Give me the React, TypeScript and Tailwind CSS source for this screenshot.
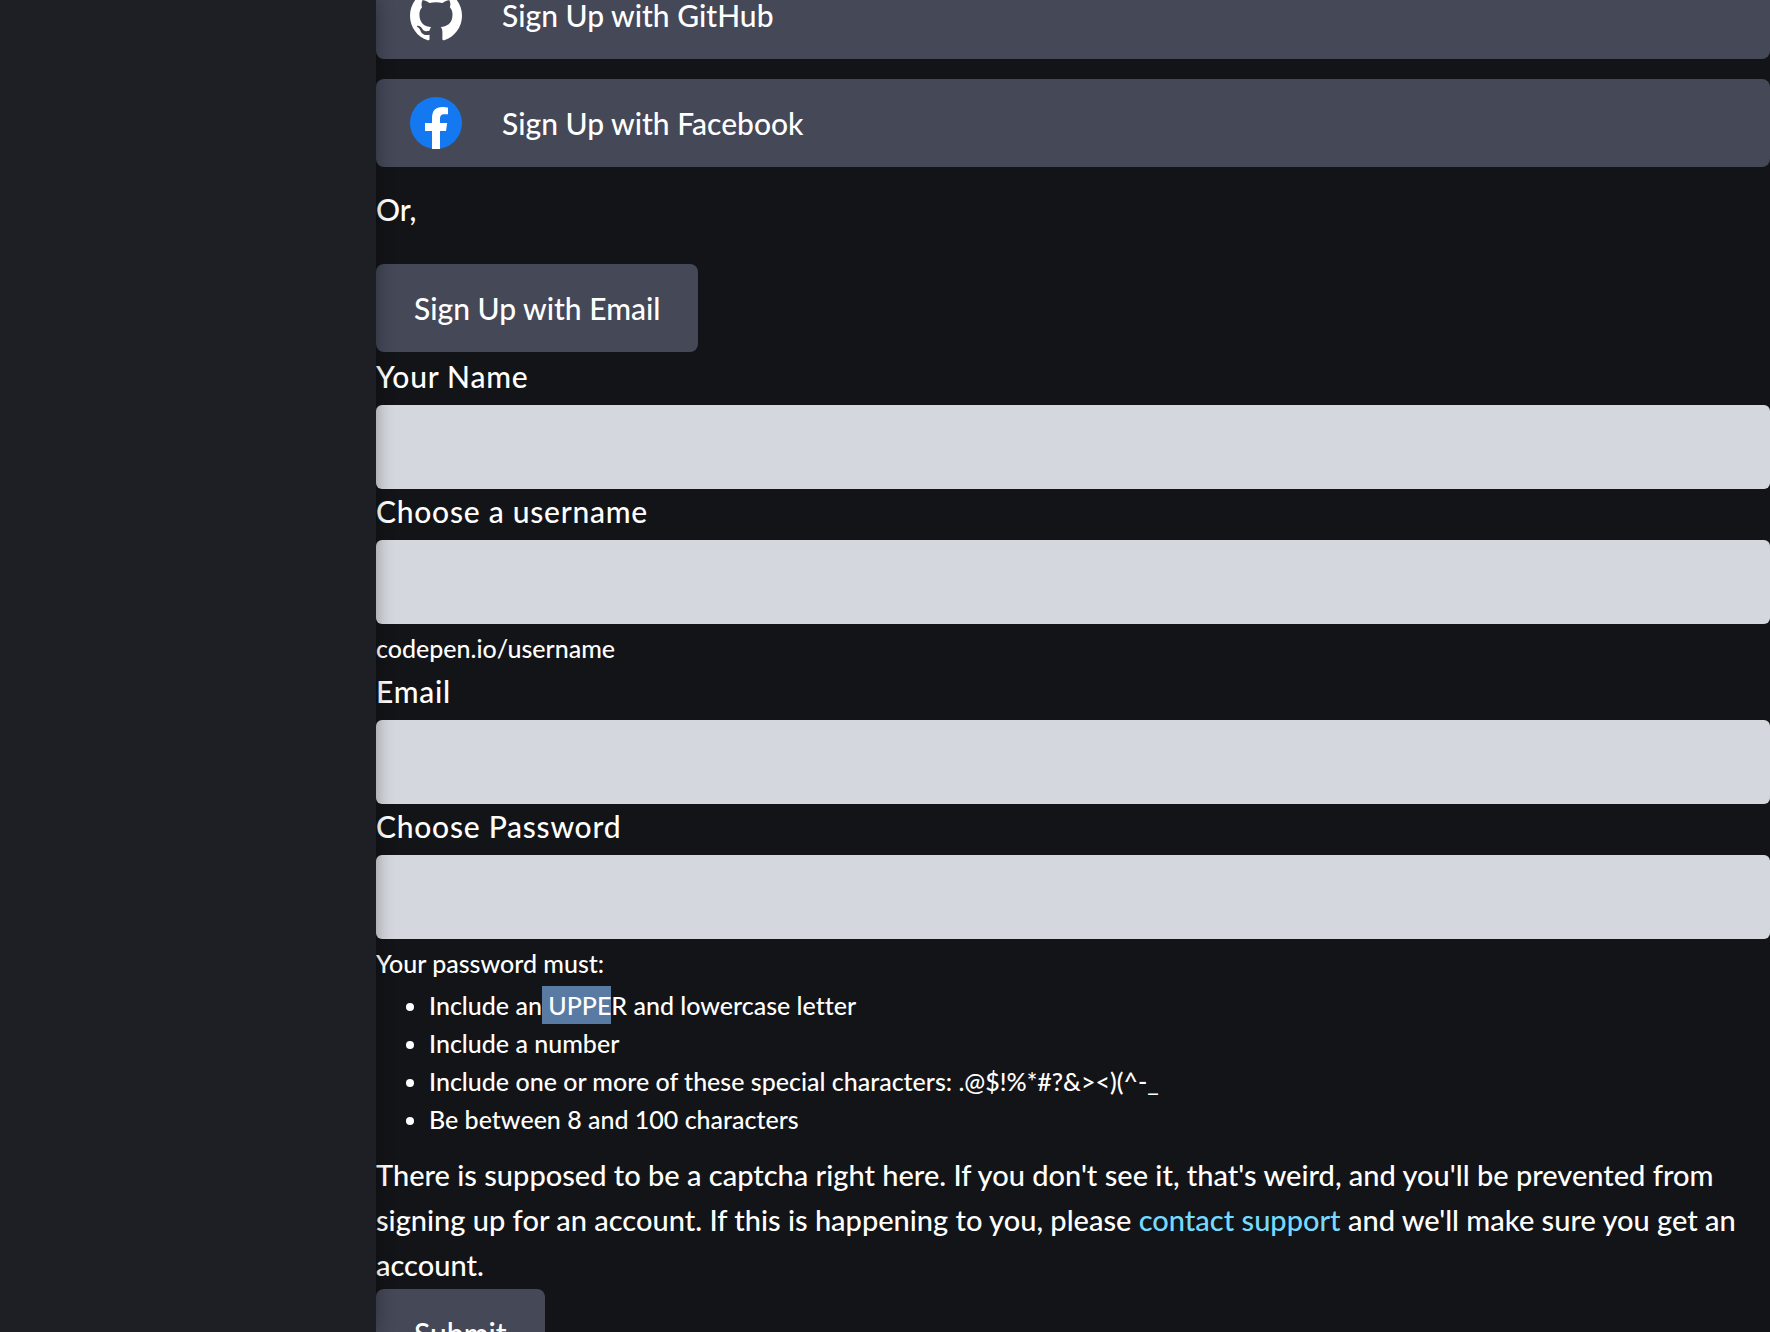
import { SiGithub } from "react-icons/si";
import type { ReactNode } from "react";

function FacebookMark() {
  return (
    <svg viewBox="0 0 52 52" className="size-[52px] shrink-0" aria-hidden="true">
      <circle cx="26" cy="26" r="26" fill="#1478f0" />
      <path
        fill="#fff"
        d="M22 52V34H15V26H22V21.500C22 13.500 25.500 10 32.500 10C34.500 10 36.500 10.300 38 10.600V17.200H34.500C31 17.200 30 19 30 22V26H37.200L36 34H30V52Z"
      />
    </svg>
  );
}

function SocialButton({ icon, children }: { icon: ReactNode; children: ReactNode }) {
  return (
    <button
      type="button"
      className="flex h-22 w-full cursor-pointer items-center gap-10 rounded-lg bg-[#444857] px-[34px] text-left"
    >
      {icon}
      <span>{children}</span>
    </button>
  );
}

function Field({ id, label, type = "text", children }: { id: string; label: string; type?: string; children?: ReactNode }) {
  return (
    <div>
      <label htmlFor={id} className="block pb-1.5 tracking-wide">
        {label}
      </label>
      <input id={id} name={id} type={type} className="block h-21 w-full rounded-md bg-[#d5d7de] px-4 text-black" />
      {children}
    </div>
  );
}

const actionButton = "h-22 cursor-pointer rounded-lg bg-[#444857] px-[38px]";

export default function App() {
  return (
    <div className="flex h-screen overflow-hidden bg-[#131417] font-['Lato',sans-serif] text-[30px] leading-[45px] font-medium text-white [font-variant-ligatures:none]">
      <aside className="relative z-10 w-94 shrink-0 bg-[#1e1f24] shadow-[0_0_16px_rgba(0,0,0,0.35)]" />
      <main className="-mt-[29px] min-w-0 flex-1">
        <div className="flex flex-col gap-5">
          <SocialButton icon={<SiGithub className="size-[52px] shrink-0" aria-hidden="true" />}>
            Sign Up with GitHub
          </SocialButton>
          <SocialButton icon={<FacebookMark />}>Sign Up with Facebook</SocialButton>
        </div>
        <p className="pt-5 pb-8">Or,</p>
        <button type="button" className={actionButton}>
          Sign Up with Email
        </button>
        <form className="pt-0.5" onSubmit={(event) => event.preventDefault()}>
          <Field id="name" label="Your Name" />
          <Field id="username" label="Choose a username">
            <p className="pt-[5px] pb-0.5 text-[25px] leading-[38px]">codepen.io/username</p>
          </Field>
          <Field id="email" label="Email" type="email" />
          <Field id="password" label="Choose Password" type="password">
            <div className="pt-[5px] pb-3.5 text-[25px] leading-[38px]">
              <p>Your password must:</p>
              <ul className="mt-1 list-disc pl-[53px]">
                <li>
                  Include an
                  <mark className="inline-block bg-[#587aa3] whitespace-pre text-white"> UPPE</mark>R and lowercase
                  letter
                </li>
                <li>Include a number</li>
                <li>Include one or more of these special characters: .@$!%*#?&amp;&gt;&lt;)(^-_</li>
                <li>Be between 8 and 100 characters</li>
              </ul>
            </div>
          </Field>
          <p className="pb-0.5 text-[29px]">
            There is supposed to be a captcha right here. If you don't see it, that's weird, and you'll be prevented from
            signing up for an account. If this is happening to you, please{" "}
            <a href="#support" className="text-[#76daff]">
              contact support
            </a>{" "}
            and we'll make sure you get an account.
          </p>
          <button type="submit" className={actionButton}>
            Submit
          </button>
        </form>
      </main>
    </div>
  );
}
